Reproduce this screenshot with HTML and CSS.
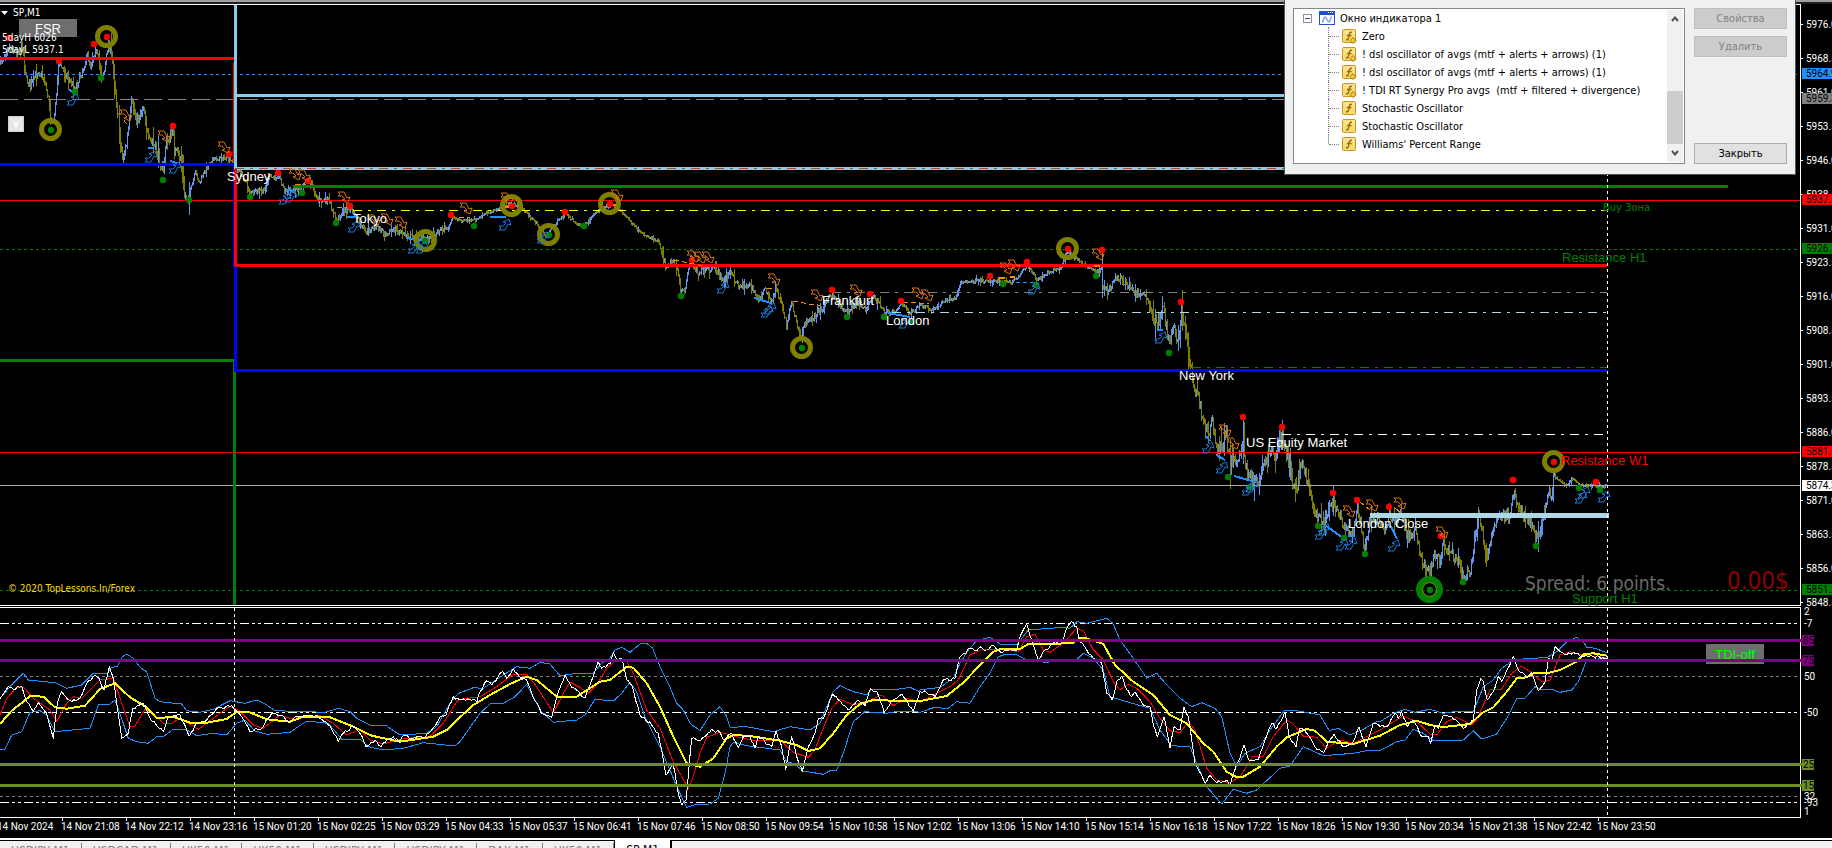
FILE: index.html
```html
<!DOCTYPE html>
<html lang="ru">
<head>
    <meta charset="UTF-8">
    <meta name="viewport" content="width=device-width, initial-scale=1.0">
    <title>SP,M1</title>
    <link rel="stylesheet" href="styles.css">
</head>
<body>

<div class="terminal">
    <div class="top-strip"></div>

    <!-- Price chart -->
    <div class="pane price-pane">
        <button type="button" class="chart-button fsr-button">FSR</button>
        <svg class="canvas" id="priceChart"></svg>
        <svg class="scale" id="priceScale"></svg>
        <button type="button" class="toggle-button">v</button>
    </div>

    <!-- Oscillator window -->
    <div class="pane osc-pane">
        <button type="button" class="chart-button tdi-button">TDI-off</button>
        <svg class="canvas" id="oscChart"></svg>
        <svg class="scale" id="oscScale"></svg>
    </div>

    <div class="time-axis" id="timeAxis"></div>

    <!-- Chart tabs -->
    <nav class="tabs">
        <button type="button" class="tab">USDJPY,M1</button>
        <button type="button" class="tab">USDCAD,M1</button>
        <button type="button" class="tab">HK50,M1</button>
        <button type="button" class="tab">HK50,M1</button>
        <button type="button" class="tab">USDJPY,M1</button>
        <button type="button" class="tab">USDJPY,M1</button>
        <button type="button" class="tab">DAX,M1</button>
        <button type="button" class="tab">HK50,M1</button>
        <button type="button" class="tab active">SP,M1</button>
    </nav>
</div>

<!-- Indicator list window -->
<div class="dialog">
    <div class="list-box">
        <div class="tree">
            <div class="tree-root">
                <span class="expander"></span>
                <svg class="window-icon" width="16" height="14" viewBox="0 0 16 14">
                    <rect x="0.5" y="0.5" width="15" height="13" fill="#fff" stroke="#1c4fd0"/>
                    <rect x="0" y="0" width="16" height="4" fill="#1c4fd0"/>
                    <path d="M9 1.5h1M11 1.5h1M13 1.5h1" stroke="#fff"/>
                    <path d="M3 11c2 0 1.500-5 3-5s2.500 5 4 5 1-5 3-5" fill="none" stroke="#7a9cf0" stroke-width="1.5"/>
                </svg>
                <span>Окно индикатора 1</span>
            </div>
            <ul class="tree-items" id="indicators"></ul>
        </div>
        <div class="scrollbar">
            <svg width="16" height="18" viewBox="0 0 16 18"><path d="M5 11l3-3.500 3 3.500" fill="none" stroke="#505050" stroke-width="2"/></svg>
            <div class="thumb"></div>
            <svg width="16" height="18" viewBox="0 0 16 18"><path d="M5 7l3 3.500 3-3.500" fill="none" stroke="#505050" stroke-width="2"/></svg>
        </div>
    </div>
    <div class="dialog-buttons">
        <button type="button" disabled>Свойства</button>
        <button type="button" disabled>Удалить</button>
        <button type="button" class="close">Закрыть</button>
    </div>
</div>

<script src="chart.js"></script>
</body>
</html>
```
FILE: styles.css
```css
* {
    box-sizing: border-box;
}

body {
    margin: 0;
    background: #000;
    color: #fff;
    font-family: "DejaVu Sans Condensed", "Noto Sans", sans-serif;
    font-size: 11px;
    overflow: hidden;
}

button {
    font-family: inherit;
    font-size: inherit;
    padding: 0;
    border: none;
    border-radius: 0;
}

.terminal {
    display: flex;
    flex-direction: column;
    height: 100vh;
}

.top-strip {
    height: 4px;
    border-top: 2px solid #a0a0a0;
    background: #202020;
}

/* chart panes */
.pane {
    position: relative;
    display: flex;
}

.price-pane {
    flex: 1;
    min-height: 0;
}

.osc-pane {
    height: 216px;
}

.canvas {
    flex: 1;
    min-width: 0;
    height: 100%;
    overflow: hidden;
    position: relative;
    pointer-events: none;
}

.scale {
    width: 32px;
    height: 100%;
    overflow: hidden;
}

svg text {
    font-size: 10px;
    fill: #fff;
    white-space: pre;
}

.scale text,
.time-axis {
    font-family: "Liberation Sans Narrow", "Roboto", sans-serif;
}

svg .session {
    font-family: "Liberation Sans", sans-serif;
    font-size: 13px;
}

.chart-button {
    position: absolute;
    width: 58px;
    background: #6e6e6e;
    font-family: "Liberation Sans", sans-serif;
    font-size: 13px;
}

.fsr-button {
    left: 19px;
    top: 15px;
    height: 18px;
    color: #fff;
}

.tdi-button {
    right: 68px;
    top: 38px;
    height: 20px;
    color: #0f0;
}

.toggle-button {
    position: absolute;
    left: 8px;
    top: 112px;
    width: 16px;
    height: 16px;
    background: #e6e6e6;
    border: 1px solid #ccc;
    color: #fff;
    font-weight: bold;
    line-height: 12px;
}

.time-axis {
    display: flex;
    height: 16px;
    margin-left: -3px;
    overflow: hidden;
    font-size: 10px;
}

.time-axis span {
    flex: 0 0 64px;
    line-height: 10px;
    white-space: nowrap;
}

/* tabs */
.tabs {
    display: flex;
    height: 10px;
    overflow: hidden;
    background: #f0f0f0;
    border-top: 2px solid #fff;
    box-shadow: inset 0 1px 0 #000;
}

.tab {
    height: 16px;
    margin-top: 3px;
    padding: 0 11px;
    background: none;
    border-right: 1px solid #808080;
    color: #808080;
    font-size: 12px;
    line-height: 14px;
}

.tab.active {
    margin-top: 0;
    padding-top: 3px;
    background: #fff;
    border-left: 1px solid #000;
    border-right: 2px solid #000;
    color: #000;
}

/* indicator list window */
.dialog {
    position: absolute;
    top: 0;
    right: 36px;
    display: flex;
    gap: 9px;
    width: 512px;
    padding: 8px 8px 10px;
    background: #f0f0f0;
    border: 1px solid #555;
    border-top: none;
    color: #000;
}

.list-box {
    display: flex;
    flex: 1;
    height: 156px;
    background: #fff;
    border: 1px solid #828790;
}

.tree {
    flex: 1;
    padding-left: 9px;
}

.tree-root {
    display: flex;
    align-items: center;
    gap: 5px;
    height: 18px;
}

.expander {
    width: 9px;
    height: 9px;
    border: 1px solid #919191;
    background: linear-gradient(#3050a0, #3050a0) center / 5px 1px no-repeat #fff;
}

.window-icon {
    margin-left: 2px;
}

.tree-items {
    list-style: none;
    margin: 0 0 0 25px;
    padding: 0;
}

.tree-items li {
    display: flex;
    align-items: center;
    gap: 5px;
    height: 18px;
    white-space: pre;
    border-left: 1px dotted #808080;
}

.tree-items li:last-child {
    border-color: transparent;
    background: linear-gradient(#aaa, #aaa) 0 0 / 1px 9px no-repeat border-box;
}

.tree-items li::before {
    content: "";
    width: 10px;
    margin-right: -2px;
    border-top: 1px dotted #808080;
}

.scrollbar {
    display: flex;
    flex-direction: column;
    width: 16px;
    margin: 1px;
    background: #f0f0f0;
}

.thumb {
    height: 53px;
    margin-top: auto;
    background: #cdcdcd;
}

.dialog-buttons {
    display: flex;
    flex-direction: column;
    gap: 7px;
    width: 93px;
}

.dialog-buttons button {
    height: 21px;
    background: #e1e1e1;
    border: 1px solid #adadad;
    color: #000;
}

.dialog-buttons button:disabled {
    background: #ccc;
    border-color: #bfbfbf;
    color: #838383;
}

.dialog-buttons .close {
    margin-top: auto;
}
```
FILE: chart.js
```js
const NS = 'http://www.w3.org/2000/svg';

function add(parent, tag, attrs, text) {
    const el = document.createElementNS(NS, tag);
    for (const key in attrs) el.setAttribute(key, attrs[key]);
    if (text !== undefined) el.textContent = text;
    parent.appendChild(el);
    return el;
}

// screen y of the first row of every pane
function layer(id, top) {
    return add(document.getElementById(id), 'g', { transform: `translate(0,${-top})` });
}

// small repeatable random generator
let seed = 7;
function rnd() {
    seed = (seed * 16807) % 2147483647;
    return seed / 2147483647;
}

const DASH = '3 3', DASHDOT = '9 6 3 6', DOTS2 = '9 3 3 3 3 3';

function hline(g, y, color, width, x1, x2, dash) {
    const attrs = { x1: x1 || 0, x2: x2 || '100%', y1: y + 0.5, y2: y + 0.5, stroke: color, 'stroke-width': width || 1, 'shape-rendering': 'crispEdges' };
    if (dash) attrs['stroke-dasharray'] = dash;
    add(g, 'line', attrs);
}

function vline(g, x, color, width, y1, y2, dash) {
    const attrs = { x1: x + 0.5, x2: x + 0.5, y1, y2, stroke: color, 'stroke-width': width, 'shape-rendering': 'crispEdges' };
    if (dash) attrs['stroke-dasharray'] = dash;
    add(g, 'line', attrs);
}

function pairs(str) {
    return str.trim().split(/\s+/).map(p => p.split(',').map(Number));
}

// ---------- price bars ----------
const price = layer('priceChart', 4);

const path = pairs(`0,62 8,45 16,52 22,45 26,80 31,83 38,70 44,80 48,98 50,116 53,122 55,105 58,62 66,75 74,88
80,75 87,55 90,65 95,48 98,60 101,75 104,70 108,42 112,60 114,80 118,120 122,158 126,145 131,105 137,120 143,104
148,142 152,142 158,155 163,172 165,145 169,138 172,132 173,128 174,150 180,158 182,170 184,195 189,195 195,172 199,182 210,160 222,157
233,162 236,170 243,176 250,193 258,191 264,191 268,176 274,178 278,174 284,190 290,190 300,187 304,180 310,181
313,188 318,200 328,200 336,220 343,210 350,208 358,220 365,232 375,226 385,232 395,230 405,234 417,238 427,238
435,233 442,228 448,228 452,217 460,220 475,220 487,212 500,208 512,203 522,208 535,222 545,235 553,225 565,214
575,222 583,226 595,212 605,206 615,205 625,215 640,233 658,240 665,265 673,260 677,270 680,293 684,290 690,258
697,272 715,268 722,280 730,272 738,285 750,285 757,298 765,290 771,302 775,288 782,305 786,325 791,300 798,330
801,338 803,325 806,322 815,315 823,305 832,294 840,305 848,312 855,300 865,308 873,295 885,313 895,310 901,303
910,313 920,305 932,310 945,300 955,298 960,282 985,280 1010,282 1017,278 1027,265 1037,280 1047,272 1060,268
1067,252 1075,258 1085,265 1095,271 1101,270 1102,285 1107,292 1115,277 1122,280 1135,292 1147,298 1152,318
1158,322 1163,302 1166,330 1169,345 1173,325 1177,345 1181,310 1186,335 1190,365 1195,388 1198,400 1205,430
1212,425 1217,452 1226,435 1230,465 1237,455 1242,445 1243,425 1244,462 1250,478 1255,480 1263,470 1270,448 1275,455 1282,434
1290,470 1296,495 1300,462 1308,480 1313,508 1320,518 1325,523 1330,500 1334,502 1340,515 1345,530 1352,532
1357,505 1364,548 1370,520 1378,517 1385,528 1390,515 1397,525 1400,512 1408,538 1415,530 1422,563 1430,572
1434,550 1440,563 1442,542 1450,550 1460,566 1463,577 1470,570 1478,514 1487,556 1492,530 1500,515 1510,515
1513,488 1518,510 1530,522 1536,537 1540,530 1544,515 1547,490 1551,498 1553,470 1558,480 1565,485 1572,478 1580,485 1607,486`);

// typical bar height up to a given x
const spread = [[110, 11], [190, 18], [235, 7], [445, 8], [660, 4], [890, 9], [1098, 5], [1150, 9], [1300, 21], [1480, 16], [1556, 17], [1700, 4]];

let up = '', down = '', k = 0, last = path[0][1];
for (let x = 0; x < 1607; x++) {
    while (path[k + 1][0] < x) k++;
    const [x0, y0] = path[k], [x1, y1] = path[k + 1];
    const size = spread.find(s => x < s[0])[1];
    const close = y0 + (y1 - y0) * (x - x0) / (x1 - x0) + (rnd() - 0.5) * size * 0.7;
    const wick = rnd() > 0.75 ? size * 0.8 : size * 0.2;
    const top = Math.round(Math.min(close, last) - rnd() * wick);
    const bottom = Math.round(Math.max(close, last) + rnd() * wick) + 1;
    const bar = `M${x + 0.5},${top}V${bottom}`;
    if (close < last) up += bar; else down += bar;
    last = close;
}
add(price, 'path', { d: down, stroke: '#808000', 'shape-rendering': 'crispEdges' });
add(price, 'path', { d: up, stroke: '#6495ed', 'shape-rendering': 'crispEdges' });
vline(price, 1102, '#6495ed', 1, 252, 298);
vline(price, 1243, '#6495ed', 1, 418, 464);

// ---------- levels ----------
hline(price, 4, '#fff');
hline(price, 74, '#1e90ff', 1, 0, 0, DASH);
hline(price, 99, '#8b7f8b', 1, 0, 0, '18 6');
hline(price, 200, '#f00');
hline(price, 249, '#008000', 1, 0, 0, DASH);
hline(price, 452, '#f00');
hline(price, 485, '#a9a9a9');
hline(price, 590, '#008000', 1, 0, 0, DASH);
hline(price, 210, '#ff0', 1, 353, 1607, DASHDOT);
hline(price, 292, '#808080', 1, 832, 1607, DASHDOT);
hline(price, 312, '#add8e6', 1, 892, 1607, DASHDOT);
hline(price, 367, '#008000', 1, 1192, 1607, DASHDOT);
hline(price, 434, '#fff', 1, 1282, 1607, DASHDOT);

vline(price, 233, '#f00', 1, 62, 168);
hline(price, 58, '#f00', 3, 0, 234);
hline(price, 164, '#00f', 3, 0, 234);
vline(price, 233, '#00f', 1, 164, 268);
hline(price, 360, '#008000', 3, 0, 234);
vline(price, 234, '#008000', 3, 359, 605);
vline(price, 235, '#87ceeb', 3, 5, 169);
hline(price, 95, '#87ceeb', 3, 235, 1607);
hline(price, 168, '#87ceeb', 3, 235, 1607);
hline(price, 168, '#a0522d', 1, 235, 1607, DASHDOT);
vline(price, 235, '#00f', 3, 265, 372);
hline(price, 370, '#00f', 3, 235, 1607);
vline(price, 235, '#f00', 3, 169, 266);
hline(price, 265, '#f00', 3, 235, 1607);
hline(price, 186, '#008000', 3, 293, 1728);
hline(price, 515, '#add8e6', 5, 1370, 1609);
vline(price, 1607, '#fff', 1, 5, 606, DASH);
hline(price, 605, '#fff');

// ---------- divergence lines ----------
function segments(color, width, dash, list) {
    list.forEach(d => add(price, 'path', { d, stroke: color, 'stroke-width': width, 'stroke-dasharray': dash, fill: 'none', 'shape-rendering': 'crispEdges' }));
}
segments('#1e90ff', 2, 'none', ['M69,90l6,2', 'M148,148h6', 'M170,161l7,2', 'M286,190l9,1', 'M347,217h10', 'M406,238l20,3',
    'M490,217h16', 'M754,298l17,5', 'M888,313l22,4', 'M1157,330h6', 'M1206,436l4,5', 'M1216,455l9,5', 'M1234,476l18,5',
    'M1325,525l18,13', 'M1348,536h7', 'M1391,526l6,13']);
segments('#1e90ff', 1, '4 3', ['M1016,283l20,-1']);
segments('#ff8c00', 1, '5 3', ['M337,207h14', 'M459,217h10', 'M674,260l30,6', 'M767,288h8', 'M793,301l27,5', 'M903,302l26,2',
    'M1360,502l10,8', 'M1395,508l6,5', 'M296,184h10', 'M124,120l3,5']);
segments('#ff8c00', 2, 'none', ['M502,207h8', 'M610,205h10', 'M998,278h7', 'M1010,277h5', 'M1094,266h6']);

// ---------- swing rings and dots ----------
pairs('106,36 50,129 425,240 511,205 548,234 609,203 801,347 1067,248 1553,461').forEach(([cx, cy]) =>
    add(price, 'circle', { cx: cx + 0.5, cy: cy + 0.5, r: 9, fill: 'none', stroke: '#808000', 'stroke-width': 5 }));
add(price, 'circle', { cx: 1429.5, cy: 589.5, r: 10, fill: 'none', stroke: '#008000', 'stroke-width': 7 });
add(price, 'circle', { cx: 1429.5, cy: 589.5, r: 7, fill: 'none', stroke: '#808000' });

function dots(color, str) {
    pairs(str).forEach(([cx, cy]) => add(price, 'circle', { cx, cy, r: 3.2, fill: color }));
}
dots('#f00', `9,38 94,44 107,37 59,61 173,126 229,154 278,173 308,181 350,206 451,215 512,206 565,212 610,204 692,260
832,290 870,294 901,301 990,276 1027,262 1068,249 1102,250 1181,302 1243,417 1282,427 1333,493 1357,500 1389,507
1441,536 1513,480 1554,462 1596,482`);
dots('#008000', `75,92 101,78 51,130 163,180 189,200 250,197 302,193 336,223 425,241 474,226 549,235 584,226 681,296
802,348 847,317 884,317 911,322 1003,284 1036,285 1096,276 1169,353 1228,477 1250,487 1318,526 1344,538 1365,554
1430,590 1463,582 1536,546 1579,488 1600,490`);

// hollow signal arrows
function arrows(color, flip, str) {
    pairs(str).forEach(([x, y]) => add(price, 'path', {
        d: 'M-6,-5H0L3,1L6,0L4,6L-2,3L1,2L-2,-1H-6L-4,-3Z',
        transform: `translate(${x},${y}) scale(1,${flip})`, fill: 'none', stroke: color
    }));
}
arrows('#d87010', 1, `126,115 164,136 224,147 295,174 304,175 344,197 374,220 387,219 401,222 466,208 507,198 617,195
693,256 700,257 708,257 774,279 817,295 856,290 918,293 927,295 1006,268 1014,265 1098,254 1225,430 1233,443
1349,511 1372,505 1400,503 1442,532`);
arrows('#1878d8', -1, `73,100 151,157 175,168 285,199 291,197 354,227 414,248 422,248 505,225 543,238 723,288 767,312
770,309 905,323 1034,289 1161,338 1208,448 1222,468 1248,490 1252,487 1321,534 1324,530 1342,545 1351,544 1394,546
1581,498 1584,493 1604,497`);

// ---------- labels on the chart ----------
[['Sydney', 227, 181], ['Tokyo', 353, 223], ['Frankfurt', 822, 305], ['London', 886, 325], ['New York', 1179, 380],
 ['US Equity Market', 1246, 447], ['London Close', 1348, 528], ['Resistance W1', 1561, 465, '#f00'],
 ['Resistance H1', 1562, 262, '#008000'], ['Support H1', 1572, 603, '#008000']].forEach(([label, x, y, color]) =>
    add(price, 'text', { x, y, class: 'session', style: `fill:${color || '#fff'}` }, label));

add(price, 'path', { d: 'M1,11h7l-3.500,4z', fill: '#fff' });
[['SP,M1', 13, 16, 10, '#fff'], ['5dayH 6026', 2, 41, 10, '#fff'], ['5dayL 5937.1', 2, 53, 10, '#fff'],
 ['Buy Зона', 1603, 211, 11, '#008000'], ['Spread: 6 points.', 1525, 590, 19, '#696969'],
 ['0.00$', 1727, 589, 24, '#8b0000'], ['© 2020 TopLessons.In/Forex', 8, 592, 10, '#ffd700']].forEach(([label, x, y, size, color]) =>
    add(price, 'text', { x, y, style: `font-size:${size}px;fill:${color}` }, label));

// ---------- price scale ----------
const pScale = layer('priceScale', 4);
vline(pScale, 0, '#fff', 1, 4, 606);
for (let i = 0; i < 18; i++) {
    const y = 24 + i * 34;
    hline(pScale, y, '#fff', 1, 0, 3);
    add(pScale, 'text', { x: 6, y: y + 4 }, (5976 - i * 7.5).toFixed(1));
}
[['5964.9', 73, '#1e90ff'], ['5959.3', 98, '#808080'], ['5937.1', 199, '#f00'], ['5926.3', 248, '#008000'],
 ['5881.6', 451, '#f00'], ['5874.3', 485, '#fff'], ['5851.2', 589, '#008000']].forEach(([value, y, color]) => {
    add(pScale, 'rect', { x: 2, y: y - 5, width: 30, height: 11, fill: color });
    add(pScale, 'text', { x: 6, y: y + 4, style: 'fill:#000' }, value);
});

// ---------- oscillator ----------
const osc = layer('oscChart', 606);

hline(osc, 623, '#fff', 1, 0, 0, DOTS2);
hline(osc, 676, '#808080', 1, 0, 0, DASH);
hline(osc, 712, '#fff', 1, 0, 0, DOTS2);
hline(osc, 796, '#808080', 1, 0, 0, DASH);
hline(osc, 802, '#fff', 1, 0, 0, DOTS2);

// every curve is stored in four parts, in thirds of a pixel from the part's origin
const origins = [[0, 570], [460, 600], [920, 600], [1380, 590]];

function curve(color, width, jitter, parts) {
    const pts = [];
    parts.forEach((part, i) => {
        const [ox, oy] = origins[i];
        const end = i < 3 ? origins[i + 1][0] : 9999;
        pairs(part).forEach(([x, y]) => {
            if (ox + x / 3 < end) pts.push([ox + x / 3, oy + y / 3]);
        });
    });
    let d = `M${pts[0]}`;
    for (let i = 1; i < pts.length; i++) {
        const [ax, ay] = pts[i - 1], [bx, by] = pts[i];
        const n = jitter ? Math.max(1, Math.round((bx - ax) / 2)) : 1;
        for (let j = 1; j <= n; j++) {
            const t = j / n, wobble = j < n ? (rnd() - 0.5) * jitter : 0;
            d += `L${(ax + (bx - ax) * t).toFixed(1)},${(ay + (by - ay) * t + wobble).toFixed(1)}`;
        }
    }
    add(osc, 'path', { d, fill: 'none', stroke: color, 'stroke-width': width, 'stroke-linejoin': 'round', 'shape-rendering': 'crispEdges' });
}

// upper band
curve('#1e90ff', 1, 0, [
    '0,385 30,350 70,310 85,330 165,338 200,355 245,345 280,310 320,312 335,292 352,290 365,262 380,252 400,265 420,292 440,305 465,385 480,395 545,402 560,422 600,427 640,418 690,392 735,400 770,390 800,405 825,422 975,427 1015,415 1050,425 1070,445 1110,465 1160,468 1200,495 1280,490 1310,470 1350,400 1370,375 1410,352 1440,355',
    '0,278 40,263 70,265 130,225 170,200 210,205 240,187 270,192 300,227 350,220 400,220 425,190 450,175 465,150 485,142 510,157 540,132 560,130 578,145 600,200 625,250 650,310 670,330 690,370 720,392 750,345 780,320 800,350 810,382 860,380 940,395 990,380 1050,390 1080,370 1100,320 1120,275 1140,257 1180,275 1220,285 1235,268 1300,270 1350,262 1378,275',
    '0,270 60,262 100,235 120,190 145,150 170,122 210,112 240,132 290,135 325,90 430,82 450,85 470,65 500,70 560,55 578,70 600,120 640,175 680,235 710,220 740,255 780,295 815,320 845,308 885,325 905,350 930,460 950,500 975,460 1020,440 1050,390 1095,330 1130,332 1200,345 1228,392 1255,385 1290,405 1330,388 1370,365',
    '0,395 40,370 75,358 105,367 150,358 190,370 230,364 280,365 310,290 340,270 365,235 400,210 450,205 500,203 530,185 560,155 590,142 610,155 620,172 645,175 680,188'
]);
// lower band
curve('#1e90ff', 1, 0, [
    '0,540 15,537 35,495 65,485 90,427 120,422 140,435 165,485 270,475 295,405 330,402 345,390 370,460 385,505 410,515 445,520 470,500 490,500 520,478 560,480 590,497 640,490 680,495 710,460 735,450 765,483 800,493 870,487 920,453 985,460 1025,508 1080,508 1105,530 1150,540 1210,535 1270,518 1365,528',
    '0,425 60,340 90,312 130,310 165,290 200,253 240,330 280,367 350,360 375,345 405,298 460,303 485,280 510,247 530,275 555,350 600,440 630,510 650,560 680,622 710,613 750,612 775,595 795,520 810,440 820,428 860,437 960,450 980,485 1000,490 1030,513 1090,523 1110,512 1130,510 1150,460 1180,365 1215,335 1280,340 1320,333 1370,335',
    '0,337 40,323 85,325 110,305 150,310 180,260 210,220 235,170 260,162 290,165 320,180 375,187 470,180 490,160 520,175 550,210 570,290 620,305 690,325 720,390 755,437 810,440 830,490 860,560 905,612 940,568 980,580 1010,570 1080,505 1110,498 1150,440 1210,467 1300,460 1350,450 1375,450',
    '0,482 50,455 75,450 100,418 130,430 160,452 250,450 280,422 305,447 350,432 380,385 410,325 435,325 465,290 480,298 515,298 540,307 575,300 595,275 620,210 680,205'
]);
// signal
curve('#f00', 1, 0, [
    '0,435 20,385 50,352 70,352 100,385 150,420 170,455 200,400 220,380 245,385 300,330 340,325 355,370 390,470 405,468 435,418 460,430 490,460 515,460 540,445 595,478 640,445 690,408 715,420 760,465 790,475 840,435 870,445 960,437 1000,460 1040,495 1080,478 1110,510 1150,522 1200,508 1240,503 1290,500 1330,460 1370,395',
    '0,298 60,290 110,260 160,222 200,222 230,260 280,338 310,280 330,247 360,262 385,280 410,255 440,205 470,180 500,185 520,220 560,330 600,385 640,485 685,565 700,530 720,460 740,412 780,397 850,415 890,423 960,420 1000,457 1045,472 1065,450 1085,395 1115,325 1140,298 1180,315 1230,300 1265,285 1300,317 1340,295 1375,305',
    '0,307 50,280 90,260 115,240 150,165 190,147 240,147 295,155 320,110 345,103 370,150 390,157 430,130 470,85 490,92 520,150 550,180 580,245 600,270 625,252 650,265 690,305 720,355 750,392 780,398 805,365 825,390 860,505 890,540 930,548 960,530 1000,468 1030,470 1060,410 1100,360 1120,372 1150,408 1190,412 1220,445 1260,420 1300,430 1340,410',
    '0,420 70,378 110,395 150,432 170,435 200,395 230,382 275,405 290,390 330,300 365,297 395,250 425,228 450,245 485,275 510,270 540,195 570,185 610,195 680,203'
]);
// base line
curve('#ff0', 2, 0, [
    '0,462 35,422 70,395 90,378 130,380 165,412 200,416 255,407 300,357 345,340 390,382 440,412 470,445 520,440 570,458 620,458 680,447 710,425 745,425 800,448 870,455 910,440 990,442 1060,470 1115,497 1200,515 1300,500 1340,480',
    '0,352 40,315 90,285 150,252 200,230 230,240 290,290 350,290 420,245 450,240 500,200 520,203 560,250 600,320 640,410 680,490 720,500 760,475 800,415 820,405 870,408 960,422 1010,435 1045,453 1080,445 1120,400 1160,345 1200,312 1240,300 1300,302 1370,303',
    '0,303 80,288 130,248 180,195 220,155 240,148 300,147 325,132 400,132 460,128 480,115 500,115 550,132 585,195 640,245 700,285 750,345 800,370 850,430 880,455 920,515 950,532 970,530 1020,500 1070,440 1100,412 1160,387 1185,392 1220,425 1300,432 1370,410',
    '0,437 60,405 110,392 150,405 190,411 270,402 305,370 340,352 380,305 410,265 440,262 460,250 500,250 540,240 590,215 610,193 640,190 680,197'
]);
// fast line
curve('#fff', 1, 3, [
    '0,385 25,350 40,357 65,348 80,395 100,425 115,398 140,430 160,505 172,400 185,365 210,392 240,385 260,340 285,315 297,325 312,360 328,290 340,325 350,400 365,505 385,490 398,415 430,400 450,445 490,485 505,440 540,435 568,498 590,460 620,450 650,415 695,407 725,440 750,485 785,475 815,430 845,435 865,455 890,440 950,435 990,468 1015,515 1030,490 1060,468 1080,490 1098,530 1125,510 1143,530 1160,510 1180,500 1195,515 1210,498 1270,505 1295,480 1320,440 1338,435 1360,380',
    '0,300 45,300 50,305 60,275 80,242 95,255 128,215 140,235 160,207 175,225 200,240 215,280 245,340 275,352 290,290 315,225 335,262 375,293 390,255 415,185 425,205 450,192 460,158 470,180 485,175 500,240 515,255 540,345 575,375 595,400 610,480 618,525 640,495 655,580 665,615 678,600 695,415 715,422 740,405 755,388 780,397 790,420 815,400 835,443 850,410 870,410 885,445 895,410 935,440 948,392 965,440 977,508 995,410 1010,470 1027,515 1045,440 1065,400 1075,355 1090,355 1118,282 1135,300 1165,330 1195,300 1215,318 1232,265 1250,275 1272,335 1300,300 1325,282 1360,335',
    '0,275 20,278 45,290 70,240 105,235 120,170 150,145 170,152 180,140 200,150 215,135 240,155 290,152 300,110 320,72 335,120 355,180 375,150 400,130 430,118 440,85 455,65 470,80 480,125 500,150 520,175 545,190 560,280 577,300 590,245 605,228 620,270 635,290 645,275 670,315 690,320 700,375 712,410 732,350 750,445 762,380 780,390 792,320 805,350 825,490 855,550 870,525 890,548 920,540 930,560 940,520 955,485 972,435 985,478 1015,480 1035,420 1055,370 1070,385 1095,335 1108,410 1128,440 1140,385 1160,400 1185,440 1212,457 1225,425 1242,402 1270,440 1300,425 1317,380 1338,440 1360,370',
    '0,410 20,410 45,370 55,385 65,365 82,410 100,390 125,440 145,440 152,460 165,405 175,415 190,375 215,380 250,415 270,400 280,390 290,300 302,265 310,275 322,330 340,305 355,260 365,275 400,200 415,240 440,262 455,248 475,303 495,275 505,205 515,215 525,170 540,185 560,195 580,188 600,198 640,200 680,205'
]);

hline(osc, 640, '#800080', 3);
hline(osc, 660, '#800080', 3);
hline(osc, 764, '#6b8e23', 3);
hline(osc, 785, '#6b8e23', 3);
vline(osc, 234, '#fff', 1, 608, 817, DASH);
vline(osc, 1607, '#fff', 1, 608, 817, DASH);
hline(osc, 607, '#fff');
hline(osc, 817, '#fff');

const oScale = layer('oscScale', 606);
vline(oScale, 0, '#fff', 1, 607, 818);
[['2', 611], ['-7', 623], ['50', 676], ['-50', 712], ['32', 796], ['-93', 802], ['1', 811]].forEach(([value, y]) =>
    add(oScale, 'text', { x: 4, y: y + 4 }, value));
[['85', 640, '#800080'], ['75', 660, '#800080'], ['25', 764, '#6b8e23'], ['15', 785, '#6b8e23']].forEach(([value, y, color]) => {
    hline(oScale, y, color, 3, 0, 3);
    add(oScale, 'rect', { x: 2, y: y - 5, width: 12, height: 11, fill: color });
    add(oScale, 'text', { x: 3, y: y + 4, style: 'fill:#000' }, value);
});

// ---------- time axis ----------
const times = ['14 Nov 2024', '14 Nov 21:08', '14 Nov 22:12', '14 Nov 23:16', '15 Nov 01:20', '15 Nov 02:25', '15 Nov 03:29',
    '15 Nov 04:33', '15 Nov 05:37', '15 Nov 06:41', '15 Nov 07:46', '15 Nov 08:50', '15 Nov 09:54', '15 Nov 10:58',
    '15 Nov 12:02', '15 Nov 13:06', '15 Nov 14:10', '15 Nov 15:14', '15 Nov 16:18', '15 Nov 17:22', '15 Nov 18:26',
    '15 Nov 19:30', '15 Nov 20:34', '15 Nov 21:38', '15 Nov 22:42', '15 Nov 23:50'];
times.forEach((time, i) => {
    const span = document.createElement('span');
    span.textContent = time;
    document.getElementById('timeAxis').appendChild(span);
    if (i) vline(osc, i * 64 - 2, '#fff', 1, 818, 821);
});

// ---------- indicator list ----------
const indicators = [['Zero', true], ['! dsl oscillator of avgs (mtf + alerts + arrows) (1)', true],
    ['! dsl oscillator of avgs (mtf + alerts + arrows) (1)', true],
    ['! TDI RT Synergy Pro avgs  (mtf + filtered + divergence)', true],
    ['Stochastic Oscillator'], ['Stochastic Oscillator'], ["Williams' Percent Range"]];
indicators.forEach(([name, custom]) => {
    const li = document.createElement('li');
    const icon = add(li, 'svg', { width: 15, height: 15, viewBox: '0 0 15 15' });
    add(icon, 'rect', { x: 0.5, y: 0.5, width: 13, height: 13, rx: 1, fill: '#f5dc6c', stroke: '#c8962c' });
    add(icon, 'path', { d: 'M1.500,1.500h11v4h-11z', fill: '#f9e595' });
    add(icon, 'path', { d: 'M10,3.500C8,2.500 7.500,4 7,7S6,11.500 4,10.500M5,6.500h4.500', fill: 'none', stroke: '#96690f', 'stroke-width': 1.4 });
    if (custom) add(icon, 'path', { d: 'M11,8.500l3,3L11,14.500L8,11.500z', fill: '#f5c83a', stroke: '#a87410' });
    const label = document.createElement('span');
    label.textContent = name;
    li.appendChild(label);
    document.getElementById('indicators').appendChild(li);
});
```
